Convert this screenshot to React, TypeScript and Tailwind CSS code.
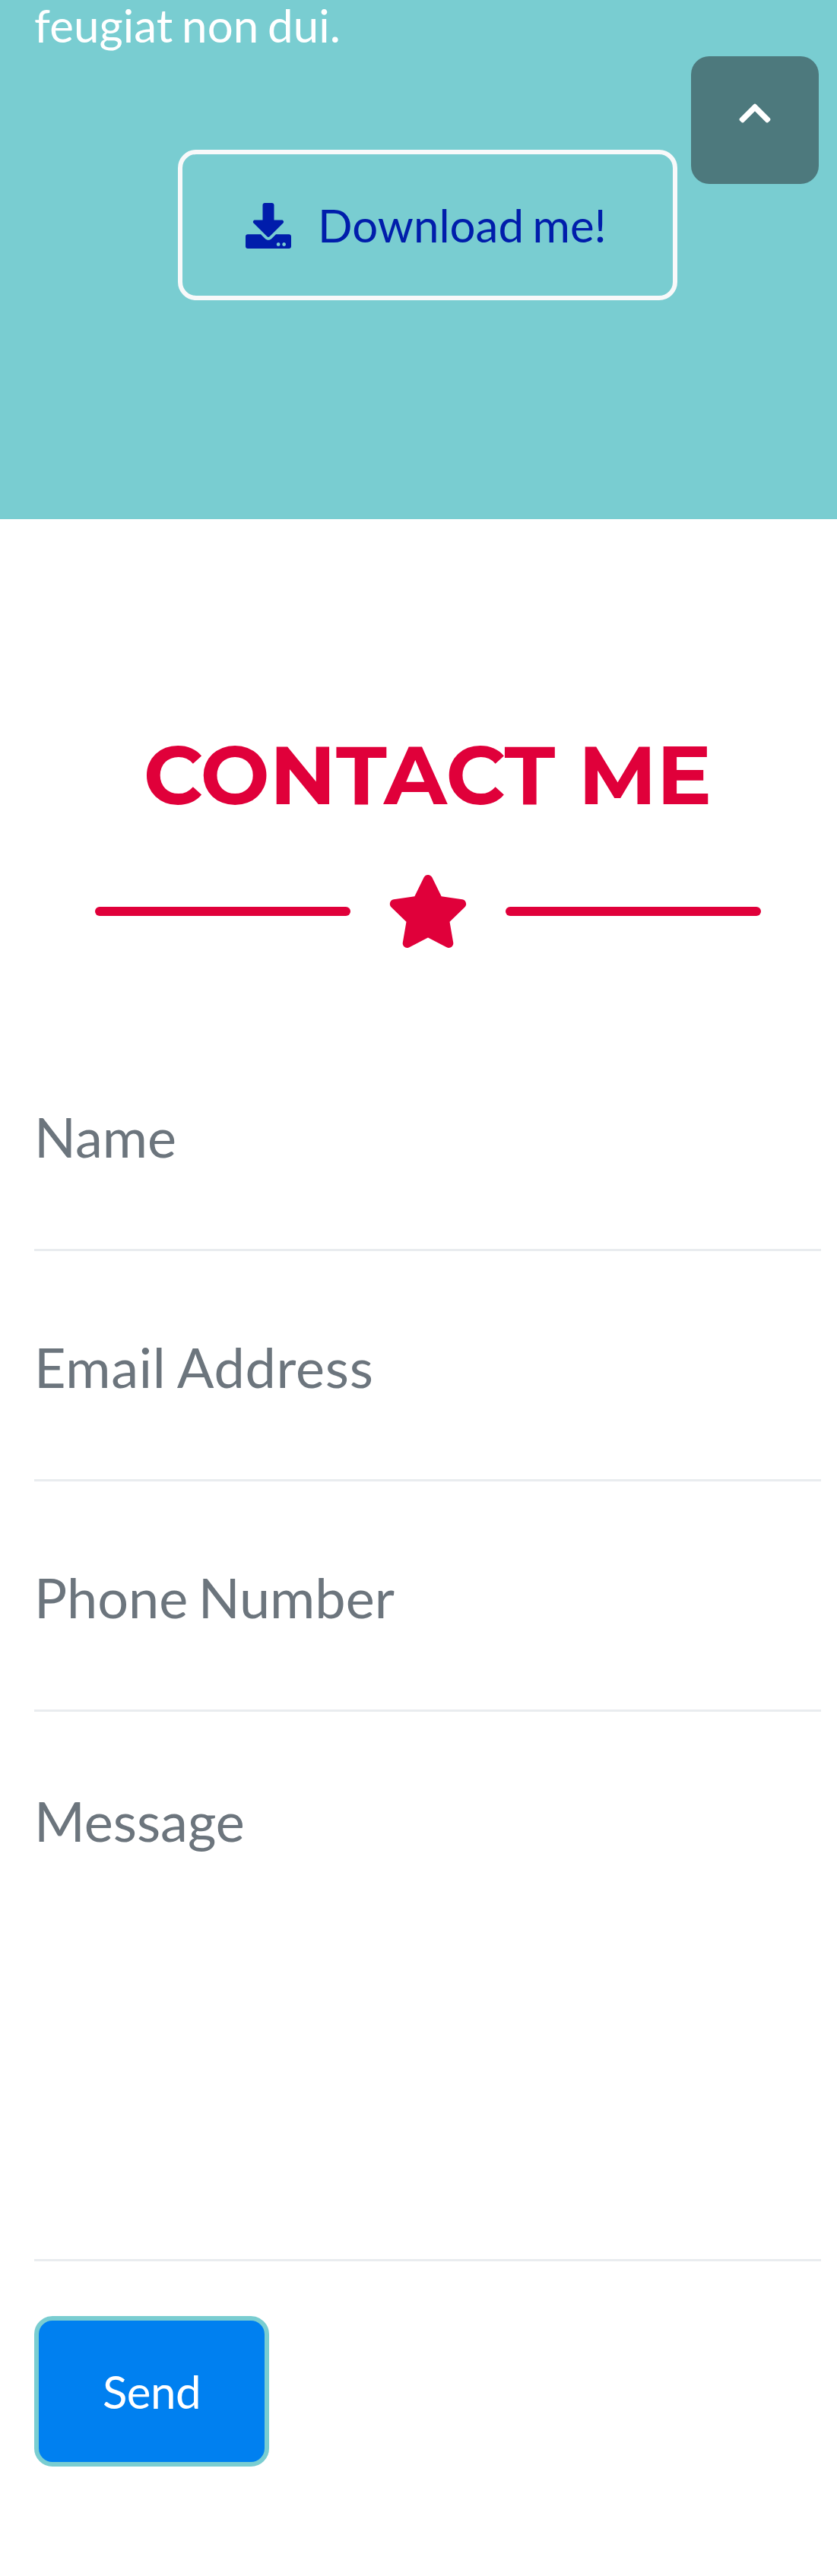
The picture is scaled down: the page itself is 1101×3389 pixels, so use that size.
import { FaChevronUp, FaDownload, FaStar } from "react-icons/fa";

const fields = [
  { label: "Name", spacing: "" },
  { label: "Email Address", spacing: "tracking-[0.75px] [word-spacing:-2.6px]" },
  { label: "Phone Number", spacing: "[word-spacing:-5px]" },
];

export default function App() {
  return (
    <div className="relative h-[3389px] w-[1101px] overflow-hidden bg-white font-['Lato',sans-serif] text-[60px] leading-[90px]">
      <div className="w-[1125px]">
        <section className="flex h-[683px] flex-col bg-[#79cdd1] px-[45px] text-white">
          <p className="leading-[66px] tracking-[0.1px] [word-spacing:-3.8px]">feugiat non dui.</p>
          <a className="mt-[131px] flex h-[198px] w-[657px] items-center self-center whitespace-nowrap rounded-3xl border-[6px] border-[#f8f9fa] pl-[83px] text-[#001dab] [word-spacing:-3.8px]">
            <FaDownload className="mr-[35px] mt-0.5 size-[60px] shrink-0" />
            Download me!
          </a>
        </section>

        <section className="flex flex-col px-[45px]">
          <h2 className="mt-[271px] whitespace-nowrap text-center font-['Montserrat','Lato',sans-serif] text-[108px] font-bold leading-[130px] text-[#e0003a]">
            CONTACT ME
          </h2>
          <div className="mt-[67px] flex h-24 items-center justify-center text-[#e0003a]">
            <span className="h-3 w-[336px] rounded-full bg-current" />
            <FaStar className="mx-12 h-24 w-[108px]" />
            <span className="h-3 w-[336px] rounded-full bg-current" />
          </div>
          <form className="mt-[96px] flex flex-col items-start text-[72px] leading-[108px] text-[#6c757d]">
            {fields.map(({ label, spacing }) => (
              <div key={label} className="flex h-[303px] w-full flex-col justify-end border-b-[3px] border-[#e9ecef] pb-[94px]">
                <span className={spacing}>{label}</span>
              </div>
            ))}
            <div className="h-[723px] w-full border-b-[3px] border-[#e9ecef] pt-[89px]">Message</div>
            <button className="mt-[72px] h-[198px] w-[309px] rounded-3xl border-[6px] border-[#79cdd1] bg-[#0080f0] text-[60px] leading-[90px] tracking-[-0.5px] text-white">
              Send
            </button>
          </form>
        </section>
      </div>
      <a className="absolute left-[909px] top-[74px] flex size-[168px] justify-center rounded-3xl bg-[#4d797d] pt-[51px] text-white">
        <FaChevronUp className="h-12 w-[42px]" />
      </a>
    </div>
  );
}
